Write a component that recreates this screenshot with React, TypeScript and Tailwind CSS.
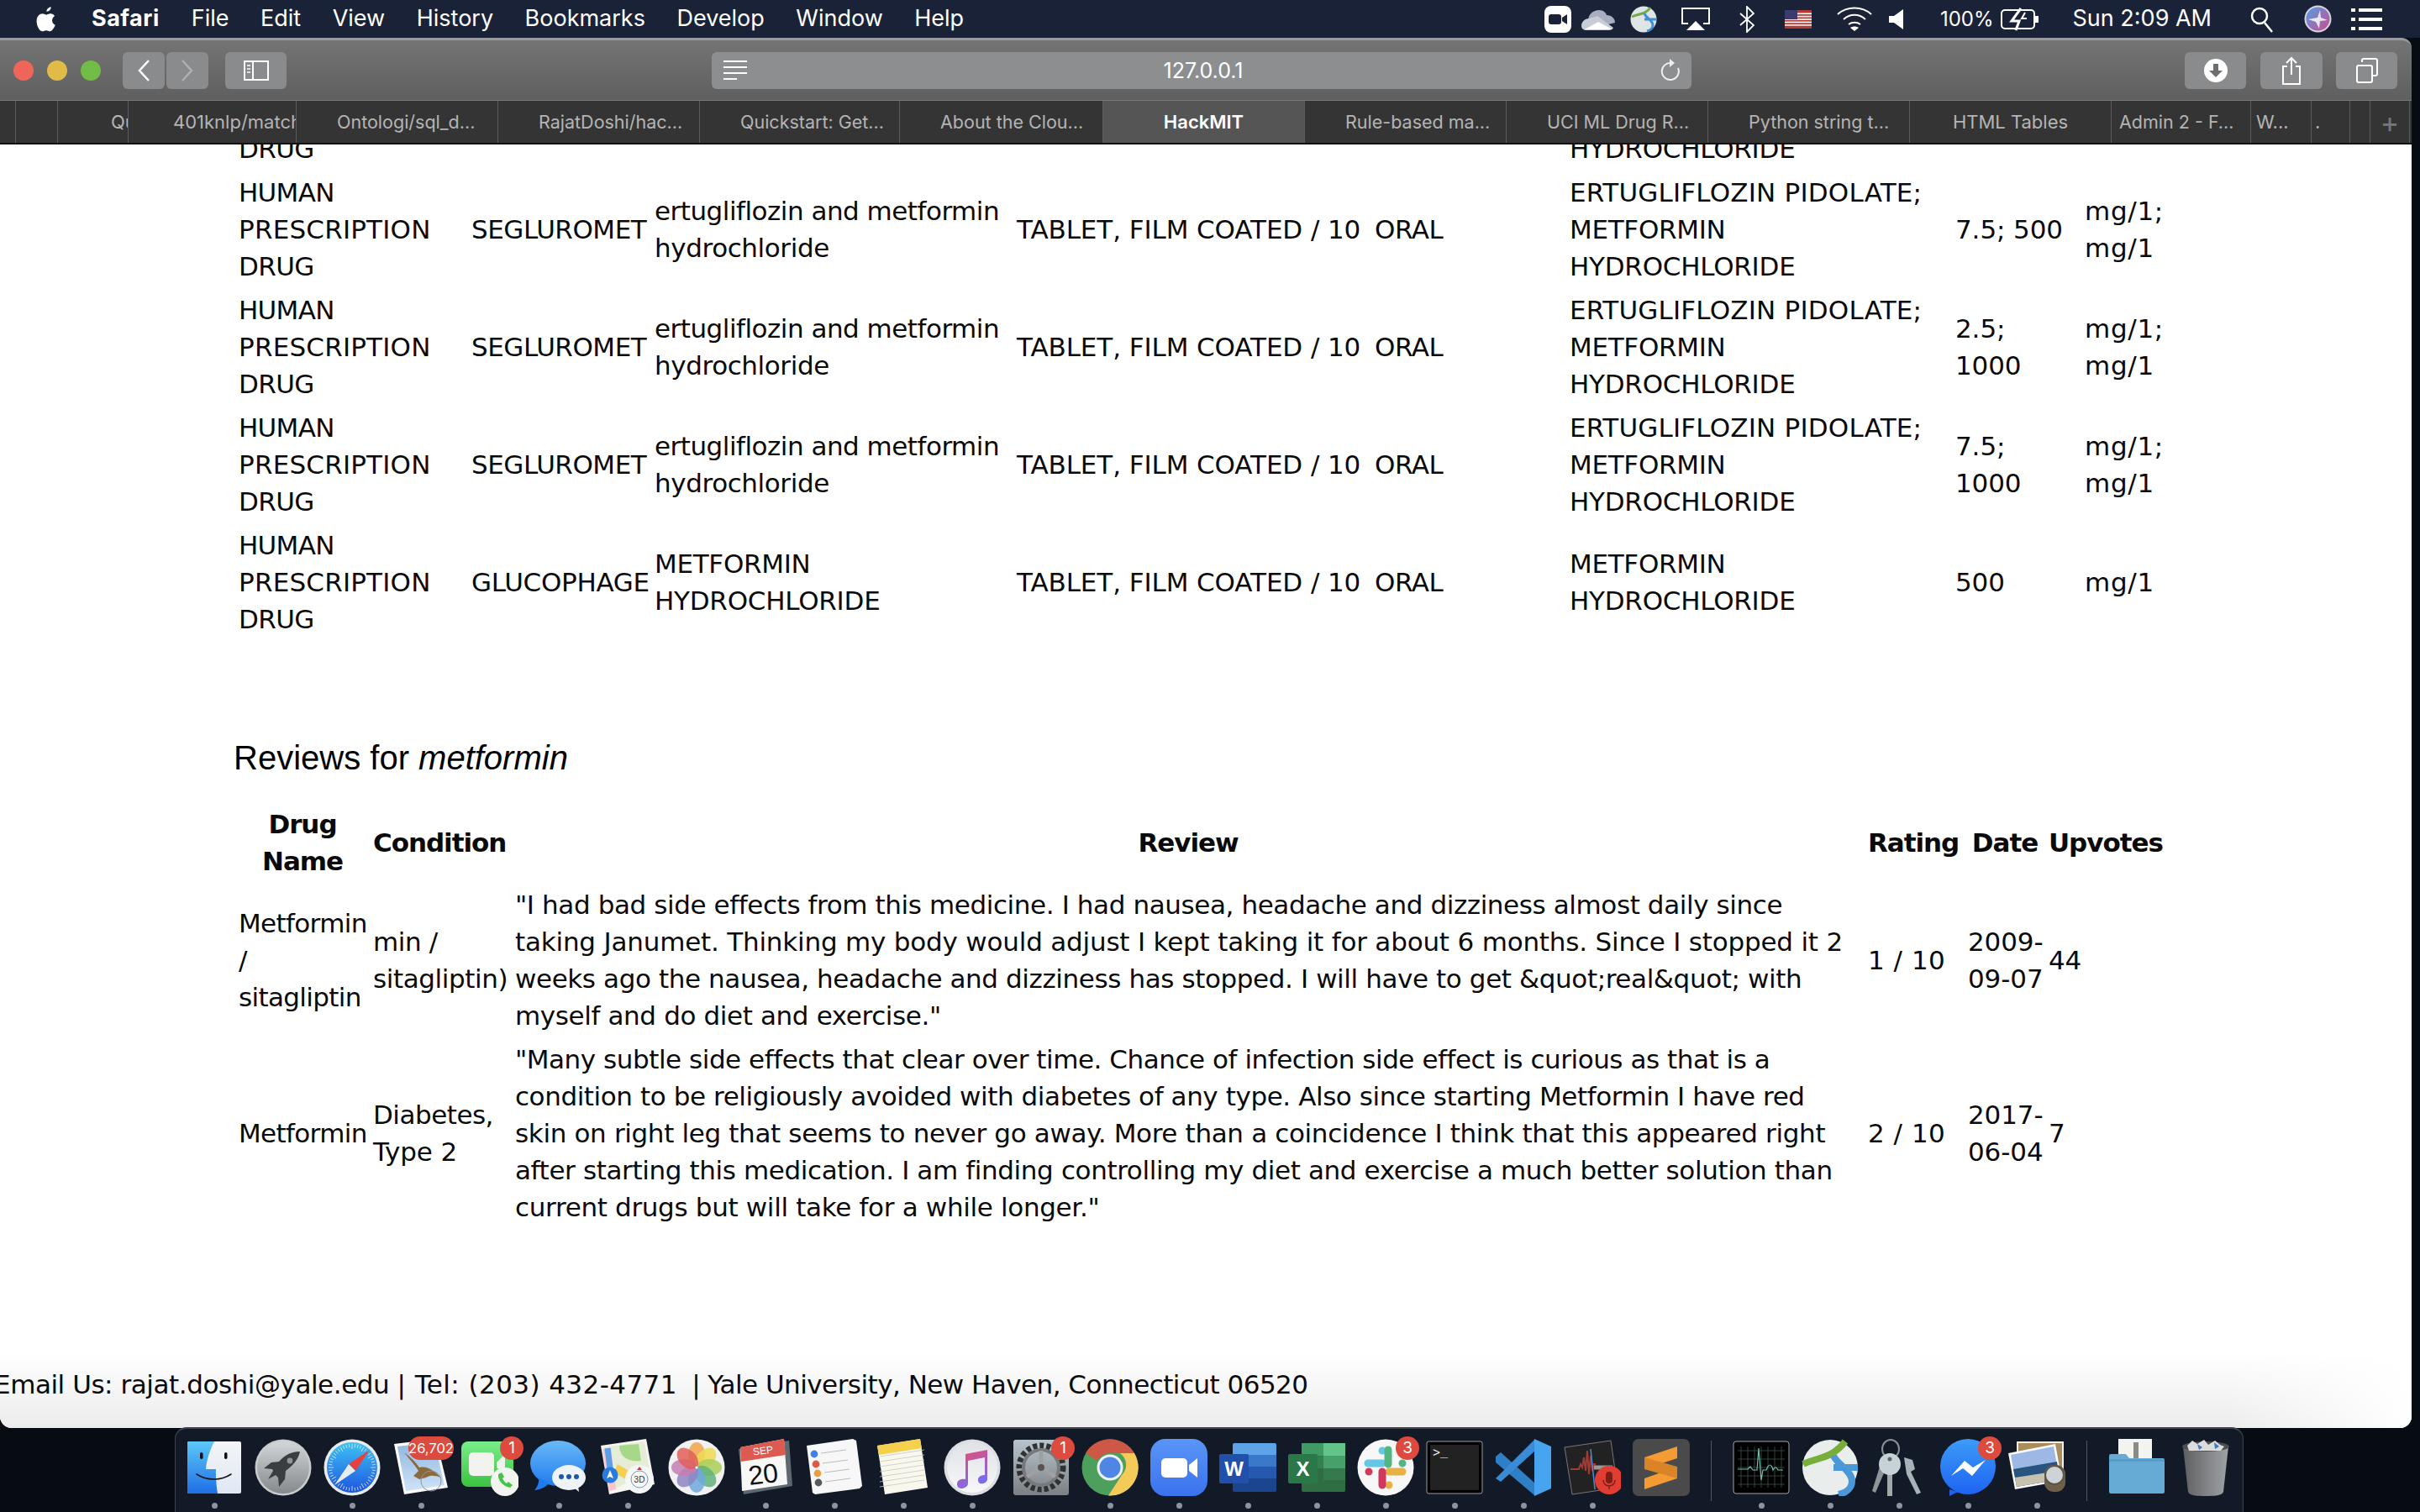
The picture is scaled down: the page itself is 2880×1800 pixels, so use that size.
import React from "react";

const UI = "font-['Inter','Liberation_Sans',sans-serif]";

function Lg({ id, a, b, x2 = 0, y2 = 1 }: { id: string; a: string; b: string; x2?: number; y2?: number }) {
  return (
    <linearGradient id={id} x1="0" y1="0" x2={x2} y2={y2}>
      <stop offset="0" stopColor={a} />
      <stop offset="1" stopColor={b} />
    </linearGradient>
  );
}

function S({ children }: { children: React.ReactNode }) {
  return <svg viewBox="0 0 68 68" width="68" height="68">{children}</svg>;
}

const ticks = Array.from({ length: 48 }, (_, i) => i * 7.5);

const icons: Record<string, React.ReactNode> = {
  finder: (
    <S>
      <defs><Lg id="f1" a="#5cc8f8" b="#1f6fe6" /><Lg id="f2" a="#f4f5f7" b="#dfe8f3" /></defs>
      <rect x="2" y="3" width="64" height="62" rx="2" fill="url(#f2)" />
      <path d="M4 3h30c-5 10-9 21-10 33h12c-.5 9 .5 20 2 29H4a2 2 0 0 1-2-2V5a2 2 0 0 1 2-2z" fill="url(#f1)" />
      <rect x="17" y="16" width="3.5" height="8" rx="1.7" fill="#111" />
      <rect x="46" y="16" width="3.5" height="8" rx="1.7" fill="#111" />
      <path d="M13 42c12 8 29 8 41 0" fill="none" stroke="#111" strokeWidth="1.6" strokeLinecap="round" />
    </S>
  ),
  launchpad: (
    <S>
      <defs><Lg id="l1" a="#d2d6d8" b="#85898b" /></defs>
      <circle cx="34" cy="34" r="33.5" fill="#c9cccd" />
      <circle cx="34" cy="34" r="31" fill="url(#l1)" />
      <path d="M54 15c-10 0-18 4-25 12l-9 1-9 7 10 1 1 2-6 10 9-5 3 3 1 11 7-9 1-10c8-6 15-13 17-23z" fill="#3b3e41" />
      <circle cx="42" cy="26" r="3.4" fill="#8f9396" />
    </S>
  ),
  safari: (
    <S>
      <defs><Lg id="s1" a="#3ec3f2" b="#1c55e0" /></defs>
      <circle cx="34" cy="34" r="33.5" fill="#e8ebee" />
      <circle cx="34" cy="34" r="30" fill="url(#s1)" />
      {ticks.map((t) => (
        <line key={t} x1="34" y1="6" x2="34" y2={t % 30 === 0 ? 12 : 10} stroke="#dce9fa" strokeWidth="0.8" transform={`rotate(${t} 34 34)`} />
      ))}
      <polygon points="55,13 38,38 30,30" fill="#e8403c" />
      <polygon points="13,55 38,38 30,30" fill="#e9ecef" />
    </S>
  ),
  mail: (
    <S>
      <defs><Lg id="m1" a="#8fb7e0" b="#cfe3f7" /></defs>
      <polygon points="2,6 52,0 66,58 14,66" fill="#fbfbfb" />
      <polygon points="6,9 50,4 62,55 16,62" fill="url(#m1)" />
      <path d="M14 16c8 6 14 12 18 18 8-2 16 2 26 12-8-3-14-3-18 0l-8 2-7-4 6-6C26 30 20 24 14 16z" fill="#8a6a3c" />
      <circle cx="46" cy="50" r="12" fill="none" stroke="#8b94a0" strokeWidth="1" />
    </S>
  ),
  facetime: (
    <S>
      <defs><Lg id="t1" a="#7aed8c" b="#3cc23f" /></defs>
      <rect x="0" y="3" width="62" height="54" rx="8" fill="url(#t1)" />
      <rect x="9" y="16" width="30" height="28" rx="5" fill="#f2f2ee" />
      <polygon points="42,28 52,18 52,42 42,34" fill="#eef2ec" />
      <circle cx="52" cy="51" r="17" fill="#f1f4ef" />
      <path d="M44 42c-1 7 6 15 14 16l3-3-5-4-2 2c-2-1-4-4-5-6l2-2-3-5z" fill="#45c24a" />
    </S>
  ),
  messages: (
    <S>
      <defs><Lg id="g1" a="#6ab9f7" b="#1f7cf0" /></defs>
      <ellipse cx="33" cy="29" rx="33" ry="27" fill="url(#g1)" />
      <path d="M10 46c1 6-2 12-5 15 6 0 14-4 17-8z" fill="#1f7cf0" />
      <ellipse cx="46" cy="46" rx="20" ry="15" fill="#eef3f8" />
      <path d="M52 58l6 5-1-7z" fill="#eef3f8" />
      <circle cx="37" cy="45" r="3" fill="#1f56a8" /><circle cx="46" cy="45" r="3" fill="#1f56a8" /><circle cx="55" cy="45" r="3" fill="#1f56a8" />
    </S>
  ),
  maps: (
    <S>
      <polygon points="2,8 56,0 66,54 12,66" fill="#f7f5ee" />
      <polygon points="5,10 54,3 60,38 14,62" fill="#e5ecd8" />
      <path d="M24 8c0 14 12 20 26 18l-3-20z" fill="#a7d88a" />
      <polygon points="4,12 14,11 20,60 12,62" fill="#f5c5cb" />
      <path d="M10 11l5 40" stroke="#5d9ee8" strokeWidth="7" />
      <path d="M22 30l26 16-6 8-24-14z" fill="#f5cf4f" />
      <circle cx="13" cy="43" r="9.5" fill="#2a7be0" />
      <path d="M13 37l4 10-4-2-4 2z" fill="#fff" />
      <circle cx="48" cy="48" r="17" fill="#f5f6f6" />
      <circle cx="48" cy="48" r="10" fill="none" stroke="#7d97b3" strokeWidth="1" />
      <text x="48" y="52" textAnchor="middle" fontSize="10" fill="#333" fontFamily="Liberation Sans">3D</text>
      <polygon points="48,33 45,37 51,37" fill="#d9392f" />
    </S>
  ),
  photos: (
    <S>
      <circle cx="34" cy="34" r="33.5" fill="#f1f1f1" />
      {[["#f1a54a", 0], ["#eddc52", 45], ["#a8cf5b", 90], ["#62b27d", 135], ["#70a8de", 180], ["#8d86c4", 225], ["#c57db0", 270], ["#e2605c", 315]].map(([c, r]) => (
        <ellipse key={r as number} cx="34" cy="19" rx="10" ry="15" fill={c as string} fillOpacity="0.85" transform={`rotate(${r} 34 34)`} />
      ))}
      <circle cx="34" cy="34" r="1.5" fill="#fff" />
    </S>
  ),
  calendar: (
    <S>
      <polygon points="2,12 62,2 66,56 8,66" fill="#5e6871" />
      <polygon points="4,10 56,0 60,54 6,62" fill="#f8f8f6" />
      <polygon points="4,10 56,0 58,19 5,27" fill="#dc5a50" />
      <text x="31" y="18" textAnchor="middle" fontSize="12" fill="#fff" fontFamily="Liberation Sans" transform="rotate(-7 31 14)">SEP</text>
      <text x="31" y="53" textAnchor="middle" fontSize="32" fill="#111" fontFamily="Liberation Sans" transform="rotate(-7 31 40)">20</text>
    </S>
  ),
  reminders: (
    <S>
      <polygon points="1,8 56,0 60,2 67,56 64,59 11,66 8,64" fill="#f7f7f8" />
      {[[10, 18, "#3f7fe8"], [12, 30, "#dc5a44"], [14, 41, "#e8a042"], [15, 52, "#555a60"]].map(([x, y, c]) => (
        <g key={y as number}>
          <circle cx={x as number} cy={y as number} r="4.4" fill={c as string} />
          <line x1={(x as number) + 8} y1={(y as number) - 1} x2={(x as number) + 38} y2={(y as number) - 5} stroke="#b9bcc0" strokeWidth="1" />
        </g>
      ))}
    </S>
  ),
  notes: (
    <S>
      <polygon points="3,8 54,0 63,58 12,66" fill="#f9f8ef" />
      <polygon points="3,8 54,0 56,11 5,19" fill="#f5d04c" />
      {[21, 27, 33, 39, 45, 51, 57].map((y) => (
        <line key={y} x1="6" y1={y} x2="59" y2={y - 8} stroke="#c9c8bd" strokeWidth="0.8" />
      ))}
    </S>
  ),
  music: (
    <S>
      <defs><Lg id="n1" a="#f04a6a" b="#7a6cf0" x2={0.4} /><Lg id="n2" a="#e0e2e6" b="#f8f8f9" /></defs>
      <circle cx="34" cy="34" r="33.5" fill="#dcdee2" />
      <circle cx="34" cy="34" r="30" fill="url(#n2)" />
      <path d="M26 18l26-5v35c0 5-10 8-11 2s5-7 8-7V22l-20 4v27c0 6-12 9-13 2s7-8 10-7z" fill="url(#n1)" />
    </S>
  ),
  prefs: (
    <S>
      <defs><Lg id="p1" a="#b6c4cd" b="#7d8084" /></defs>
      <rect x="1" y="1" width="66" height="66" rx="3" fill="url(#p1)" />
      <circle cx="34" cy="34" r="26" fill="none" stroke="#2f3133" strokeWidth="7" strokeDasharray="5 3" />
      <circle cx="34" cy="34" r="21" fill="none" stroke="#77797b" strokeWidth="4" />
      <g stroke="#9ea0a2" strokeWidth="5"><line x1="34" y1="34" x2="34" y2="14" /><line x1="34" y1="34" x2="17" y2="45" /><line x1="34" y1="34" x2="51" y2="45" /></g>
      <circle cx="34" cy="34" r="4" fill="#555" />
    </S>
  ),
  chrome: (
    <S>
      <circle cx="34" cy="34" r="33.5" fill="#4ca05c" />
      <path d="M5 17A33.5 33.5 0 0 1 63 17H34a17 17 0 0 0-15 9z" fill="#cf5745" />
      <path d="M63 17A33.5 33.5 0 0 1 32 67.5L48 43a17 17 0 0 0-2-26z" fill="#f4cb58" />
      <circle cx="34" cy="34" r="15.5" fill="#eef1f5" />
      <circle cx="34" cy="34" r="12.5" fill="#4f86e6" />
    </S>
  ),
  zoom: (
    <S>
      <defs><Lg id="z1" a="#5a95f7" b="#3a72ee" /></defs>
      <rect x="0" y="0" width="68" height="68" rx="18" fill="url(#z1)" />
      <rect x="13" y="23" width="31" height="23" rx="5" fill="#fff" />
      <path d="M46 31l10-8v23l-10-8z" fill="#fff" />
    </S>
  ),
  word: (
    <S>
      <rect x="16" y="5" width="52" height="15" rx="2" fill="#5ea3e8" />
      <rect x="16" y="19" width="52" height="15" fill="#3a79c9" />
      <rect x="16" y="33" width="52" height="15" fill="#2559b0" />
      <path d="M16 47h52v14a2 2 0 0 1-2 2H18a2 2 0 0 1-2-2z" fill="#1c4590" />
      <rect x="0" y="18" width="35" height="35" rx="2" fill="#2150ac" />
      <text x="17.5" y="44" textAnchor="middle" fontSize="24" fontWeight="bold" fill="#fff" fontFamily="Liberation Sans">W</text>
    </S>
  ),
  excel: (
    <S>
      <rect x="16" y="5" width="52" height="58" rx="2" fill="#2f6e42" />
      <rect x="16" y="5" width="26" height="15" fill="#3f9a63" />
      <rect x="42" y="5" width="26" height="15" fill="#62c488" />
      <rect x="16" y="20" width="26" height="15" fill="#338050" />
      <rect x="42" y="20" width="26" height="15" fill="#46a06a" />
      <rect x="42" y="35" width="26" height="14" fill="#347a4d" />
      <rect x="0" y="18" width="35" height="35" rx="2" fill="#2a7748" />
      <text x="17.5" y="44" textAnchor="middle" fontSize="24" fontWeight="bold" fill="#fff" fontFamily="Liberation Sans">X</text>
    </S>
  ),
  slack: (
    <S>
      <circle cx="34" cy="34" r="33.5" fill="#f7f7f7" />
      <g fill="none" strokeWidth="9" strokeLinecap="round">
        <path d="M30 14v0M13 29h17" stroke="#66c6e6" />
        <path d="M37 13v17M54 29v0" stroke="#53b484" />
        <path d="M54 39H38M38 55v0" stroke="#e6b145" />
        <path d="M14 39v0M30 39v16" stroke="#cf3a5c" />
      </g>
    </S>
  ),
  terminal: (
    <S>
      <rect x="1" y="3" width="66" height="62" rx="2" fill="#000" stroke="#9a9c9e" strokeWidth="1" />
      <rect x="5" y="7" width="58" height="54" fill="#222" />
      <text x="8" y="21" fontSize="15" fill="#fff" fontFamily="Liberation Mono">&gt;_</text>
    </S>
  ),
  vscode: (
    <S>
      <path d="M1 21l6-5 41 37-1 14-46-39z" fill="#2f7fc6" />
      <path d="M1 47l6 4L48 14 47 1z" fill="#3a8bd6" />
      <path d="M47 0l20 9v50l-20 9z" fill="#47a4ef" />
    </S>
  ),
  voice: (
    <S>
      <polygon points="1,10 56,2 64,58 10,66" fill="#222" stroke="#777" strokeWidth="1" />
      <path d="M8 36h10l2-6 2 4 2-12 2 16 2-24 2 28 2-22 2 18 2-8h2" fill="none" stroke="#a33a32" strokeWidth="2" />
      <path d="M36 34h22" stroke="#999" strokeWidth="5" />
      <line x1="32" y1="12" x2="37" y2="60" stroke="#3f8fe0" strokeWidth="1.5" />
      <circle cx="54" cy="49" r="17" fill="#e23d33" />
      <rect x="50" y="39" width="8" height="14" rx="4" fill="#7c1f18" />
      <path d="M47 49c0 9 14 9 14 0M54 55v5" fill="none" stroke="#7c1f18" strokeWidth="1.5" />
    </S>
  ),
  sublime: (
    <S>
      <rect x="0" y="0" width="68" height="68" rx="7" fill="#4a4a4a" />
      <path d="M14 22l39-13v14L14 36zM53 33L14 47v13l39-13z" fill="#f49b33" />
      <path d="M14 22v14l39 11V33z" fill="#db8427" />
    </S>
  ),
  activity: (
    <S>
      <rect x="1" y="3" width="66" height="62" rx="3" fill="#000" stroke="#a2a4a6" strokeWidth="1" />
      <g stroke="#3a5650" strokeWidth="0.8">
        {[8, 16, 24, 32, 40, 48, 56].map((p) => <line key={p} x1={p + 2} y1="9" x2={p + 2} y2="58" />)}
        {[14, 24, 34, 44, 54].map((p) => <line key={p} x1="6" y1={p} x2="62" y2={p} />)}
      </g>
      <path d="M6 36h12l3-3 3 4h5l2-26 3 38 2-12h4c3-8 6-8 8 0 2-4 4-4 6 0h6" fill="none" stroke="#6ec3ad" strokeWidth="1.2" />
    </S>
  ),
  citrix: (
    <S>
      <circle cx="34" cy="34" r="33" fill="#e9edec" />
      <path d="M2 30C18 22 36 24 52 3" fill="none" stroke="#78ad3c" strokeWidth="8" />
      <path d="M38 20c4 10 22 18 22 30 0 8-6 14-16 16" fill="none" stroke="#4a98d8" strokeWidth="8" />
      <path d="M38 34h29" stroke="#4a98d8" strokeWidth="8" />
    </S>
  ),
  keys: (
    <S>
      <ellipse cx="24" cy="12" rx="10" ry="11" fill="none" stroke="#8b8f92" strokeWidth="2" />
      <path d="M40 22l10 3 3 11-5 3 12 25-5 2-12-24z" fill="#a6b3b8" />
      <path d="M12 30l-10 32 4 2 12-28z" fill="#8f9598" />
      <rect x="20" y="38" width="6" height="30" fill="#a3a8aa" />
      <circle cx="23" cy="30" r="13" fill="#c6d2d6" />
      <circle cx="23" cy="24" r="2.5" fill="#60676b" />
    </S>
  ),
  messenger: (
    <S>
      <defs><Lg id="e1" a="#3c9cf8" b="#1e63f2" /></defs>
      <circle cx="34" cy="33" r="33" fill="url(#e1)" />
      <path d="M12 60v8l10-5z" fill="#1e63f2" />
      <path d="M14 44l16-18 10 8 15-9-16 19-11-9z" fill="#fff" />
    </S>
  ),
  preview: (
    <S>
      <rect x="10" y="3" width="56" height="50" fill="#f3f1ea" />
      <rect x="12" y="5" width="52" height="46" fill="#a98d5c" />
      <polygon points="0,17 56,6 64,50 8,60" fill="#fbfbfb" />
      <polygon points="3,19 54,9 61,48 10,57" fill="#9db8e4" />
      <polygon points="6,36 58,27 61,48 10,57" fill="#28547f" />
      <polygon points="8,46 60,38 61,48 10,57" fill="#c7c2ae" />
      <rect x="43" y="31" width="25" height="32" rx="11" fill="#6e5f49" />
      <circle cx="55" cy="43" r="11" fill="#cdd4d6" stroke="#5e5548" strokeWidth="2" />
    </S>
  ),
  folder: (
    <S>
      <rect x="12" y="0" width="40" height="28" fill="#f3f3f0" />
      <rect x="30" y="4" width="6" height="20" fill="#8a8a86" />
      <path d="M1 20a2 2 0 0 1 2-2h18l4 5h40a2 2 0 0 1 2 2v38a2 2 0 0 1-2 2H3a2 2 0 0 1-2-2z" fill="#66abd6" />
      <rect x="1" y="24" width="66" height="3" fill="#5b9cc6" />
    </S>
  ),
  trash: (
    <S>
      <defs><Lg id="h1" a="#5f6062" b="#a0a3a6" x2={1} y2={0} /></defs>
      <path d="M7 9h54l-6 54c-1 4-9 5-21 5s-20-1-21-5z" fill="url(#h1)" />
      <ellipse cx="34" cy="9" rx="28" ry="6" fill="#4d4e50" />
      <path d="M12 8l6-6 6 4 8-5 5 6 8-5 6 5 5 2-4 5H14z" fill="#dcdcdc" />
      <path d="M24 6l6 4-4 3zM44 4l6 5-5 3z" fill="#4577b8" />
    </S>
  ),
};

function Dock() {
  const item = (k: string, dot: boolean, badge?: string, wide?: boolean) => (
    <div key={k} className="relative w-[82px] h-[99px] flex flex-col items-center shrink-0 pt-[12px]">
      {icons[k]}
      {dot && <div className="mt-[8px] w-[7px] h-[7px] rounded-full bg-[#8d93a1]" />}
      {badge && (
        <div className={`absolute top-[9px] h-[28px] rounded-full bg-[#dd4a3e] text-white leading-[28px] text-center ${UI} ${wide ? "left-[26px] w-[54px] text-[16.500px]" : "left-[53px] w-[28px] text-[19px]"}`}>
          {badge}
        </div>
      )}
    </div>
  );
  const sep = (k: string) => (
    <div key={k} className="w-[37px] h-[99px] flex justify-center shrink-0 pt-[14px]">
      <div className="w-[1px] h-[72px] bg-[#4e5666]" />
    </div>
  );
  return (
    <div className="absolute left-[208px] top-[1699px] w-[2462px] h-[101px] pl-[5px] flex bg-[#121a27] border-t-[2px] border-l-[1px] border-r-[1px] border-[#3d424d] rounded-t-[14px]">
      {item("finder", true)}
      {item("launchpad", false)}
      {item("safari", true)}
      {item("mail", true, "26,702", true)}
      {item("facetime", false, "1")}
      {item("messages", true)}
      {item("maps", true)}
      {item("photos", false)}
      {item("calendar", true)}
      {item("reminders", true)}
      {item("notes", true)}
      {item("music", true)}
      {item("prefs", false, "1")}
      {item("chrome", true)}
      {item("zoom", true)}
      {item("word", true)}
      {item("excel", true)}
      {item("slack", true, "3")}
      {item("terminal", true)}
      {item("vscode", true)}
      {item("voice", true)}
      {item("sublime", false)}
      {sep("s1")}
      {item("activity", true)}
      {item("citrix", true)}
      {item("keys", true)}
      {item("messenger", true, "3")}
      {item("preview", true)}
      {sep("s2")}
      {item("folder", false)}
      {item("trash", false)}
    </div>
  );
}

function MenuBar() {
  const menus = ["File", "Edit", "View", "History", "Bookmarks", "Develop", "Window", "Help"];
  return (
    <div className={`h-[45px] bg-[#1a2238] flex items-center justify-between text-white text-[27px] shrink-0 pr-[35px] ${UI}`}>
      <div className="flex items-center">
        <svg viewBox="0 0 24 28" width="28" height="32" className="ml-[41px]" fill="#fff">
          <path d="M17 1c.2 2.4-2.2 5-4.6 4.8C12.200 3.500 14.700 1.200 17 1zM21.500 20c-1 2.500-3.300 6.500-5.500 6.500-1.600 0-2.300-1-4-1s-2.500 1-4 1C5 26.500 2 20.800 2 16c0-5 3.200-7.800 6.200-7.800 1.700 0 3 1.100 3.900 1.100.9 0 2.500-1.300 4.400-1.100.9 0 3 .4 4.300 2.300-3.900 2.500-3.200 8 .7 9.500z" />
        </svg>
        <span className="ml-[40px] font-bold tracking-[0.5px]">Safari</span>
        <div className="flex ml-[38px] gap-[37.500px]">
          {menus.map((m) => <span key={m}>{m}</span>)}
        </div>
      </div>
      <div className="flex items-center">
        <svg viewBox="0 0 32 32" width="32" height="32"><rect width="32" height="32" rx="8" fill="#fff" /><rect x="5" y="10" width="15" height="12" rx="3" fill="#1a2238" /><path d="M21 14l6-4v12l-6-4z" fill="#1a2238" /></svg>
        <svg viewBox="0 0 40 32" width="40" height="32" className="ml-[12px]"><path d="M8 18c0-8 6-13 13-13 5 0 8 3 9 6 6 0 10 4 10 9l-32 8z" fill="#a8aec0" /><path d="M0 24c0-5 4-9 9-9l10-3 19 14c-1 2-3 3-5 3H6c-3 0-6-2-6-5z" fill="#c7ccd9" /><path d="M4 28l16-9 17 9z" fill="#fff" /></svg>
        <svg viewBox="0 0 32 32" width="32" height="32" className="ml-[18px]"><circle cx="16" cy="16" r="15.500" fill="#dfe4e4" /><path d="M2 13C10 9 18 11 24 2" fill="none" stroke="#76a845" strokeWidth="3" /><path d="M17 9c2 6 10 8 10 14 0 3-3 6-7 7M17 16h14" fill="none" stroke="#3f8fd8" strokeWidth="3" /></svg>
        <svg viewBox="0 0 36 30" width="36" height="30" className="ml-[28px]" fill="none" stroke="#fff" strokeWidth="2"><path d="M9 20H2V2h32v18h-7" /><path d="M18 17l11 11H7z" fill="#fff" stroke="none" /></svg>
        <svg viewBox="0 0 18 32" width="18" height="32" className="ml-[34px]" fill="none" stroke="#fff" strokeWidth="1.800"><path d="M1 9l16 14-8 8V1l8 8L1 23" /></svg>
        <svg viewBox="0 0 32 22" width="32" height="22" className="ml-[36px]">
          <rect width="32" height="22" fill="#b23a34" />
          {[3.4, 6.800, 10.200, 13.600, 17].map((y) => <rect key={y} y={y} width="32" height="1.700" fill="#f3f3f3" />)}
          <rect width="15" height="11" fill="#3c3b6e" />
        </svg>
        <svg viewBox="0 0 42 30" width="42" height="30" className="ml-[30px]" fill="none" stroke="#fff" strokeWidth="2"><path d="M1 9c11-10 29-10 40 0M8 15c8-7 18-7 26 0M14 21c4-3 10-3 14 0" /><path d="M21 29l-5-4c3-2 7-2 10 0z" fill="#fff" stroke="none" /></svg>
        <svg viewBox="0 0 17 24" width="17" height="24" className="ml-[20px]" fill="#fff"><path d="M0 8h6l11-8v24L6 16H0z" /></svg>
        <span className="ml-[44px] text-[24px]">100%</span>
        <svg viewBox="0 0 46 28" width="46" height="28" className="ml-[8px]" fill="none" stroke="#fff" strokeWidth="2"><rect x="1" y="3" width="39" height="22" rx="4" /><rect x="41" y="10" width="4" height="8" fill="#fff" stroke="none" /><path d="M24 1L13 16h9l-4 11" strokeWidth="3" /><path d="M29 6l-4 7h6" strokeWidth="2" /></svg>
        <span className="ml-[40px]">Sun 2:09 AM</span>
        <svg viewBox="0 0 28 32" width="28" height="32" className="ml-[46px]" fill="none" stroke="#fff" strokeWidth="2.500"><circle cx="11" cy="12" r="9" /><path d="M17 20l9 11" /></svg>
        <svg viewBox="0 0 33 33" width="33" height="33" className="ml-[36px]"><defs><Lg id="q1" a="#4f9ee8" b="#d04a8e" x2={1} y2={1} /></defs><circle cx="16.500" cy="16.500" r="16" fill="#d6d8de" /><circle cx="16.500" cy="16.500" r="14" fill="url(#q1)" /><path d="M5 17l11-2 3-9 1 9 8 3-9 1-1 9-4-8z" fill="#e8e6f0" /></svg>
        <svg viewBox="0 0 37 26" width="37" height="26" className="ml-[23px]" fill="#fff"><rect width="5" height="4" /><rect x="9" width="28" height="4" /><rect y="11" width="5" height="4" /><rect x="9" y="11" width="28" height="4" /><rect y="22" width="5" height="4" /><rect x="9" y="22" width="28" height="4" /></svg>
      </div>
    </div>
  );
}

function Btn({ w, children, ml }: { w: string; children: React.ReactNode; ml: string }) {
  return <div className={`${w} ${ml} h-[44px] rounded-[6px] bg-[#8a8b8c] flex items-center justify-center shrink-0`}>{children}</div>;
}

function Toolbar() {
  return (
    <div className={`h-[75px] shrink-0 flex items-center border-t-[3px] border-t-[#9a9a9a] border-b-[1px] border-b-[#777] bg-gradient-to-b from-[#747474] to-[#5f5f60] rounded-tr-[12px] ${UI}`}>
      <div className="w-[24px] h-[24px] rounded-full bg-[#f0655a] ml-[16px]" />
      <div className="w-[24px] h-[24px] rounded-full bg-[#e0bb48] ml-[16px]" />
      <div className="w-[24px] h-[24px] rounded-full bg-[#72bd48] ml-[16px]" />
      <Btn w="w-[50px]" ml="ml-[26px]">
        <svg viewBox="0 0 16 28" width="16" height="28" fill="none" stroke="#fff" strokeWidth="2.500"><path d="M14 2L3 14l11 12" /></svg>
      </Btn>
      <Btn w="w-[50px]" ml="ml-[2px]">
        <svg viewBox="0 0 16 28" width="16" height="28" fill="none" stroke="#b0b0b0" strokeWidth="2.500"><path d="M2 2l11 12L2 26" /></svg>
      </Btn>
      <Btn w="w-[73px]" ml="ml-[20px]">
        <svg viewBox="0 0 30 24" width="30" height="24" fill="none" stroke="#fff" strokeWidth="2"><rect x="1" y="1" width="28" height="22" /><path d="M11 1v22" /><path d="M4 6h4M4 10h4M4 14h4" strokeWidth="1.500" /></svg>
      </Btn>
      <div className="w-[1166px] ml-[506px] h-[44px] rounded-[6px] bg-[#8d8e8f] flex items-center justify-between px-[14px] shrink-0">
        <svg viewBox="0 0 28 24" width="28" height="24" fill="#fff"><rect width="28" height="2" /><rect y="7" width="28" height="2" /><rect y="14" width="28" height="2" /><rect y="21" width="16" height="2" /></svg>
        <span className="text-white text-[25px] translate-y-[1px]">127.0.0.1</span>
        <svg viewBox="0 0 24 28" width="24" height="28" fill="none" stroke="#eee" strokeWidth="2"><path d="M14 5a10 10 0 1 0 8 6" /><path d="M12 0l6 5-6 5z" fill="#eee" stroke="none" /></svg>
      </div>
      <Btn w="w-[73px]" ml="ml-[587px]">
        <svg viewBox="0 0 28 28" width="28" height="28"><circle cx="14" cy="14" r="14" fill="#fff" /><path d="M11 6h6v8h5l-8 8-8-8h5z" fill="#6d6d6d" /></svg>
      </Btn>
      <Btn w="w-[74px]" ml="ml-[17px]">
        <svg viewBox="0 0 24 34" width="24" height="34" fill="none" stroke="#fff" strokeWidth="2"><path d="M7 12H2v21h20V12h-5" /><path d="M12 22V2M6 8l6-6 6 6" /></svg>
      </Btn>
      <Btn w="w-[73px]" ml="ml-[16px]">
        <svg viewBox="0 0 28 30" width="28" height="30" fill="none" stroke="#fff" strokeWidth="2"><rect x="2" y="9" width="18" height="20" rx="2" /><path d="M8 5V3a2 2 0 0 1 2-2h14a2 2 0 0 1 2 2v16a2 2 0 0 1-2 2h-3" /></svg>
      </Btn>
    </div>
  );
}

const LEFT = "justify-start pl-[48px] text-[21.500px]";
const tabs: { w: string; t?: string; cls?: string; active?: boolean }[] = [
  { w: "w-[19px]" },
  { w: "w-[50px]" },
  { w: "w-[84px]", t: "Qu", cls: "justify-start pl-[63px]" },
  { w: "w-[200px]", t: "401knlp/match_finder", cls: "justify-start pl-[53px]" },
  { w: "w-[240px]", t: "Ontologi/sql_d...", cls: LEFT },
  { w: "w-[240px]", t: "RajatDoshi/hac...", cls: LEFT },
  { w: "w-[238px]", t: "Quickstart: Get...", cls: LEFT },
  { w: "w-[242px]", t: "About the Clou...", cls: LEFT },
  { w: "w-[240px]", t: "HackMIT", active: true, cls: "justify-center" },
  { w: "w-[240px]", t: "Rule-based ma...", cls: LEFT },
  { w: "w-[240px]", t: "UCI ML Drug R...", cls: LEFT },
  { w: "w-[240px]", t: "Python string t...", cls: LEFT },
  { w: "w-[240px]", t: "HTML Tables", cls: "justify-center" },
  { w: "w-[166px]", t: "Admin 2 - F...", cls: "justify-start pl-[9px] text-[21.500px]" },
  { w: "w-[72px]", t: "W...", cls: "justify-start pl-[6px]" },
  { w: "w-[46px]", t: ".", cls: "justify-start pl-[4px]" },
  { w: "w-[24px]" },
  { w: "w-[47px]", t: "+", cls: "justify-center text-[34px] text-[#777]" },
];

function TabBar() {
  return (
    <div className={`h-[52px] shrink-0 flex bg-[#343434] border-b-[2px] border-b-[#111] text-[#b4b4b4] text-[22px] ${UI}`}>
      {tabs.map((tab, i) => (
        <div
          key={i}
          className={`${tab.w} h-[50px] shrink-0 overflow-hidden whitespace-nowrap flex items-center border-r-[1px] border-r-[#5c5c5c] ${tab.active ? "bg-[#555556] text-white font-semibold" : ""} ${tab.cls ?? ""}`}
        >
          {tab.t && <span>{tab.t}</span>}
        </div>
      ))}
    </div>
  );
}

const PT = (
  <>
    <span className="tracking-[-0.7px]">HUMAN</span><br />
    <span className="tracking-[0.2px]">PRESCRIPTION</span><br />
    <span className="tracking-[-0.6px]">DRUG</span>
  </>
);
const ERT = (
  <>
    <span className="tracking-[-0.5px]">ertugliflozin and metformin</span><br />
    <span className="tracking-[-0.4px]">hydrochloride</span>
  </>
);
const MH = (
  <>
    <span className="tracking-[-0.3px]">METFORMIN</span><br />
    <span className="tracking-[-0.25px]">HYDROCHLORIDE</span>
  </>
);
const ACT = (
  <>
    <span className="tracking-[0.2px]">ERTUGLIFLOZIN PIDOLATE;</span><br />
    {MH}
  </>
);
const SEG = <span className="tracking-[-0.47px]">SEGLUROMET</span>;
const TAB = <span>TABLET, FILM COATED / 10</span>;
const ORAL = <span className="tracking-[-0.5px]">ORAL</span>;
const MG = <span className="tracking-[0.7px]">mg/1;<br />mg/1</span>;

const drugRows: React.ReactNode[][] = [
  [PT, SEG, ERT, TAB, ORAL, ACT, "2.5; 500", MG],
  [PT, SEG, ERT, TAB, ORAL, ACT, "7.5; 500", MG],
  [PT, SEG, ERT, TAB, ORAL, ACT, <>2.5;<br />1000</>, MG],
  [PT, SEG, ERT, TAB, ORAL, ACT, <>7.5;<br />1000</>, MG],
  [PT, <span className="tracking-[-0.3px]">GLUCOPHAGE</span>, MH, TAB, ORAL, MH, "500", <span className="tracking-[0.7px]">mg/1</span>],
];

function Content() {
  return (
    <div className="flex-1 relative bg-white overflow-hidden rounded-b-[14px] text-[#0a0a0a] text-[31px] leading-[44px] tracking-[-0.1px] font-['DejaVu_Sans','Liberation_Sans',sans-serif]">
      <table className="table-fixed ml-[284px] mt-[-109px] w-[2300px]">
        <colgroup>
          <col className="w-[277px]" /><col className="w-[218px]" /><col className="w-[431px]" /><col className="w-[426px]" />
          <col className="w-[232px]" /><col className="w-[459px]" /><col className="w-[154px]" /><col className="w-[103px]" />
        </colgroup>
        <tbody>
          {drugRows.map((row, i) => (
            <tr key={i}>
              {row.map((c, j) => <td key={j} className="py-[4px] p-0 whitespace-nowrap align-middle">{c}</td>)}
            </tr>
          ))}
        </tbody>
      </table>

      <h2 className="ml-[278px] mt-[109px] h-[60px] text-[40px] leading-[60px] tracking-normal text-black font-['Liberation_Sans',sans-serif] font-normal">
        Reviews for <em>metformin</em>
      </h2>

      <table className="table-fixed ml-[284px] mt-[23px] w-[2294px]">
        <colgroup>
          <col className="w-[160px]" /><col className="w-[169px]" /><col className="w-[1610px]" /><col className="w-[119px]" /><col className="w-[96px]" /><col className="w-[140px]" />
        </colgroup>
        <thead>
          <tr className="text-center font-bold tracking-[-1.05px]">
            <th className="py-[4px] pr-[8px]">Drug<br />Name</th>
            <th className="py-[4px] pr-[8px] text-left">Condition</th>
            <th className="py-[4px] pr-[8px]">Review</th>
            <th className="py-[4px] text-left">Rating</th>
            <th className="py-[4px] pr-[8px]">Date</th>
            <th className="py-[4px] text-left">Upvotes</th>
          </tr>
        </thead>
        <tbody className="whitespace-nowrap">
          <tr>
            <td className="py-[4px] tracking-[-0.65px]">Metformin<br />/<br />sitagliptin</td>
            <td className="py-[4px] tracking-[-0.4px]">min /<br />sitagliptin)</td>
            <td className="py-[4px]">
              <span className="tracking-[-0.4px]">"I had bad side effects from this medicine. I had nausea, headache and dizziness almost daily since</span><br />
              <span className="tracking-[-0.2px]">taking Janumet. Thinking my body would adjust I kept taking it for about 6 months. Since I stopped it 2</span><br />
              <span className="tracking-[-0.4px]">weeks ago the nausea, headache and dizziness has stopped. I will have to get &amp;quot;real&amp;quot; with</span><br />
              <span className="tracking-[-0.38px]">myself and do diet and exercise."</span>
            </td>
            <td className="py-[4px] tracking-[0.5px]">1 / 10</td>
            <td className="py-[4px]">2009-<br />09-07</td>
            <td className="py-[4px]">44</td>
          </tr>
          <tr>
            <td className="py-[4px] tracking-[-0.65px]">Metformin</td>
            <td className="py-[4px]"><span className="tracking-[-0.5px]">Diabetes,</span><br />Type 2</td>
            <td className="py-[4px]">
              <span className="tracking-[-0.46px]">"Many subtle side effects that clear over time. Chance of infection side effect is curious as that is a</span><br />
              <span className="tracking-[-0.42px]">condition to be religiously avoided with diabetes of any type. Also since starting Metformin I have red</span><br />
              <span className="tracking-[-0.35px]">skin on right leg that seems to never go away. More than a coincidence I think that this appeared right</span><br />
              <span className="tracking-[-0.38px]">after starting this medication. I am finding controlling my diet and exercise a much better solution than</span><br />
              <span className="tracking-[-0.33px]">current drugs but will take for a while longer."</span>
            </td>
            <td className="py-[4px] tracking-[0.5px]">2 / 10</td>
            <td className="py-[4px]">2017-<br />06-04</td>
            <td className="py-[4px]">7</td>
          </tr>
        </tbody>
      </table>

      <div className="absolute left-0 right-0 bottom-0 h-[90px] bg-gradient-to-b from-white to-[#ececec] pt-[16px] whitespace-nowrap">
        <span className="ml-[-7px] tracking-[-0.45px]">Email Us: rajat.doshi@yale.edu </span>
        <span className="tracking-[0.42px]">| Tel: (203) 432-4771 </span>
        <span className="ml-[7px] tracking-[-0.53px]">| Yale University, New Haven, Connecticut 06520</span>
        <div className="absolute right-0 top-0 bottom-0 w-[220px] bg-gradient-to-r from-transparent to-white" />
      </div>
    </div>
  );
}

export default function App() {
  return (
    <div className="relative w-[2880px] h-[1800px] bg-[#070b12] overflow-hidden">
      <div className="w-[2870px] h-[1700px] flex flex-col">
        <MenuBar />
        <Toolbar />
        <TabBar />
        <Content />
      </div>
      <div className="absolute left-[2870px] top-0 w-[10px] h-[45px] bg-[#1a2238]" />
      <Dock />
    </div>
  );
}
